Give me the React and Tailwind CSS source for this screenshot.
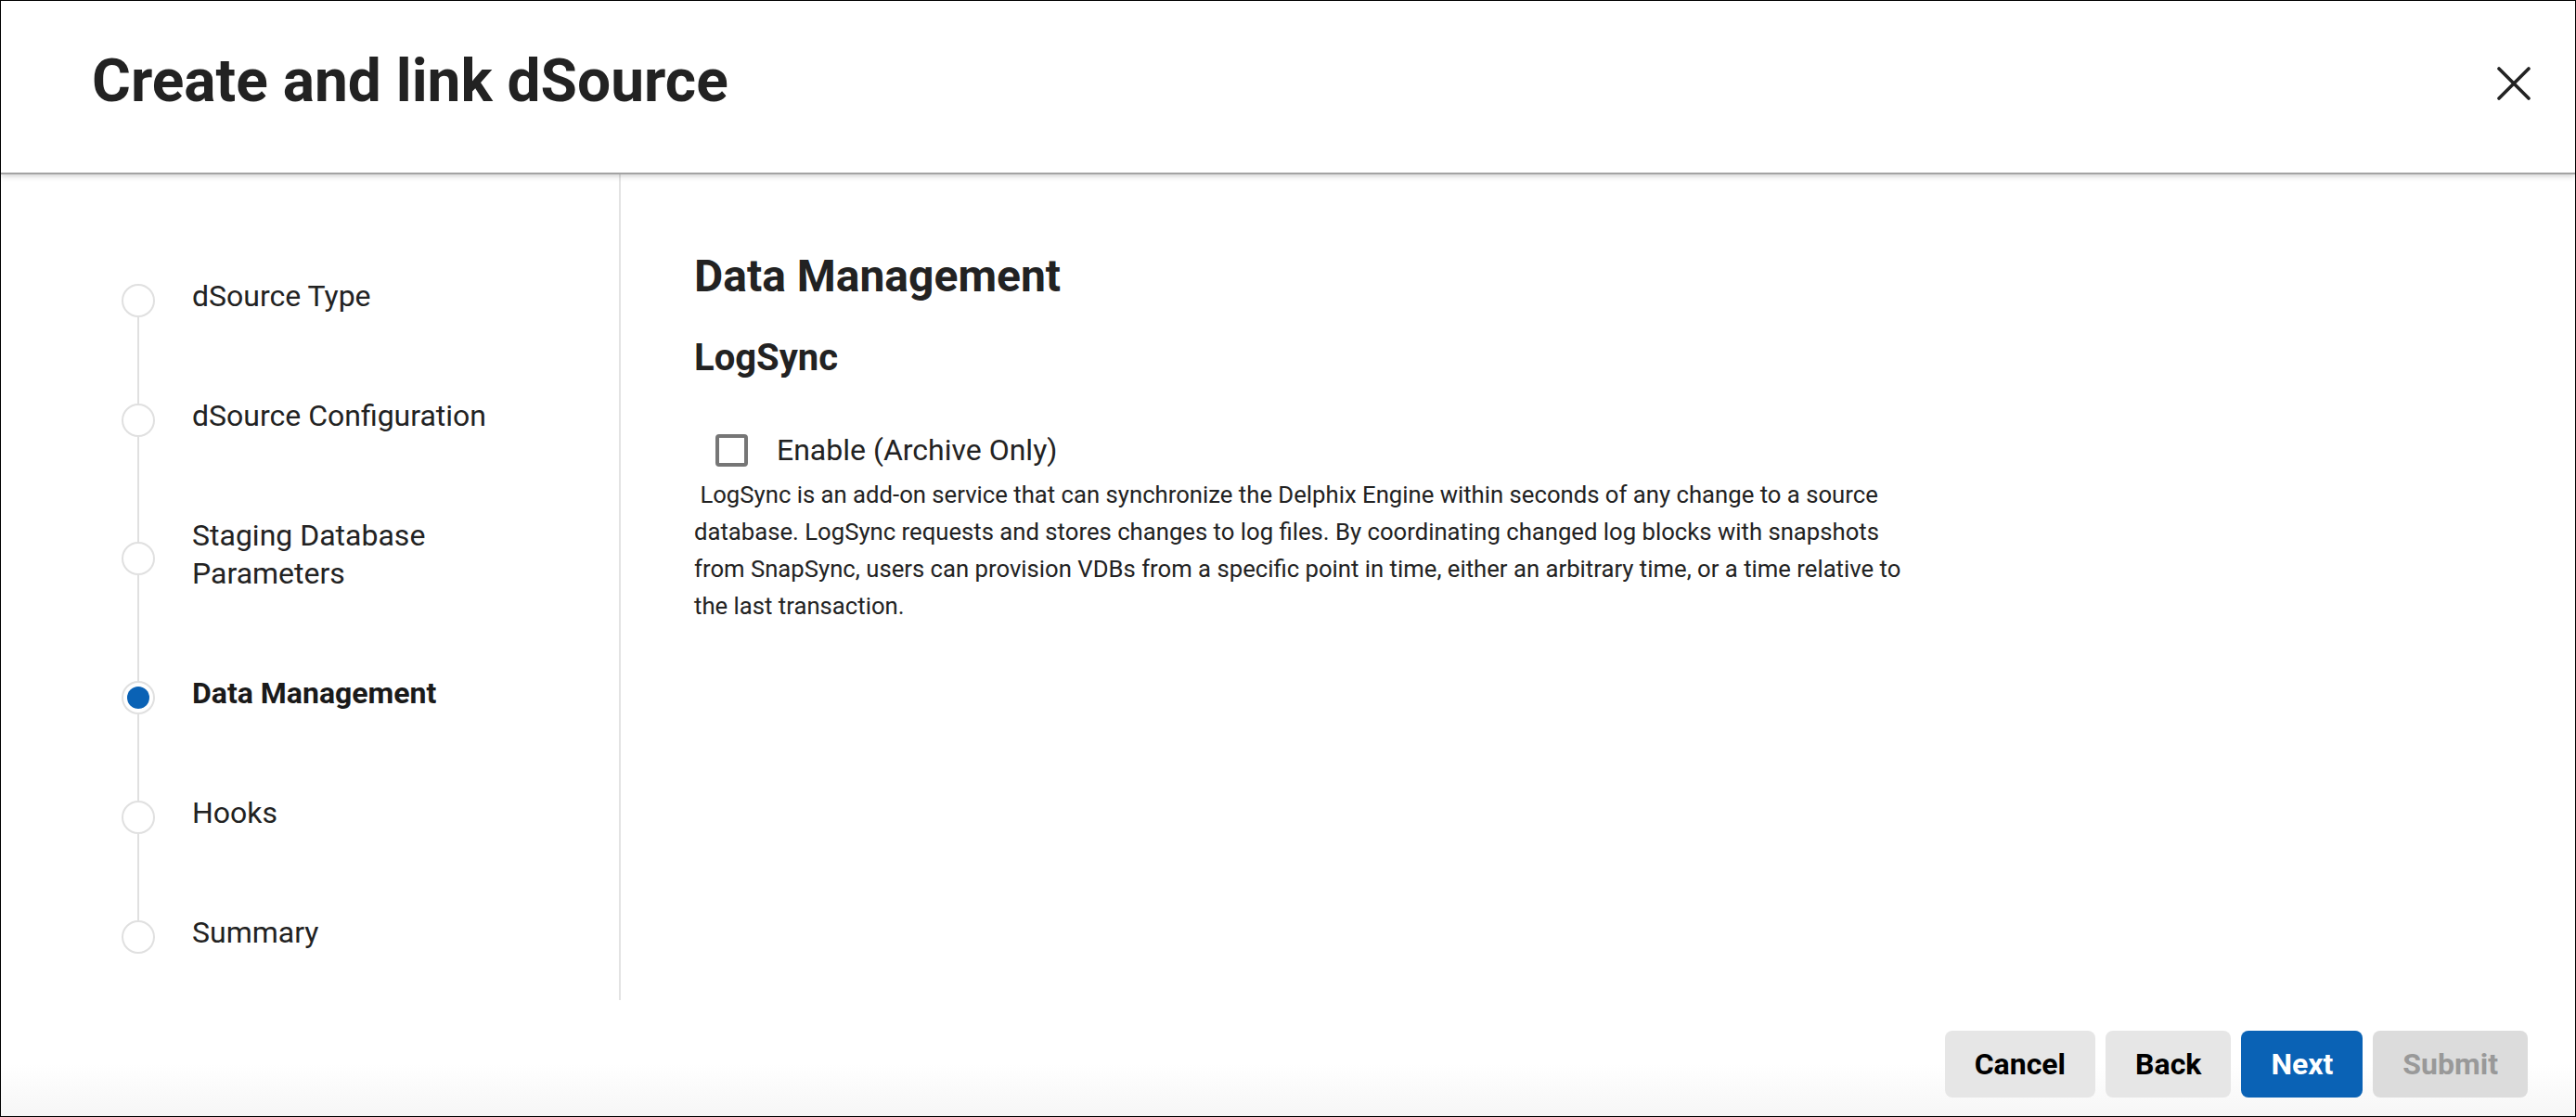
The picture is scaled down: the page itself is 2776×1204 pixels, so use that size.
const steps = [
    { label: "dSource Type" },
    { label: "dSource Configuration" },
    { label: "Staging Database Parameters", wrap: true },
    { label: "Data Management", active: true },
    { label: "Hooks" },
    { label: "Summary" },
];

function CloseIcon() {
    return (
        <svg width="36" height="36" viewBox="0 0 36 36" fill="none">
            <path
                d="M2 2L34 34M34 2L2 34"
                stroke="#222222"
                strokeWidth="3.6"
                strokeLinecap="round"
            />
        </svg>
    );
}

function StepCircle({ active }) {
    return (
        <div className="w-[36px] h-[36px] shrink-0 rounded-full border-2 border-[#e0e0e0] bg-white flex items-center justify-center">
            {active && <div className="w-[24px] h-[24px] rounded-full bg-[#0a62b5]" />}
        </div>
    );
}

function Stepper() {
    return (
        <div className="flex flex-col">
            {steps.map((step, i) => (
                <div key={step.label} className="flex items-stretch">
                    {/* rail: line above, circle, line below */}
                    <div className="w-[36px] flex flex-col items-center">
                        <div
                            className={`flex-1 w-[2px] ${
                                i === 0 ? "bg-transparent" : "bg-[#e0e0e0]"
                            }`}
                        />
                        <StepCircle active={step.active} />
                        <div
                            className={`flex-1 w-[2px] ${
                                i === steps.length - 1 ? "bg-transparent" : "bg-[#e0e0e0]"
                            }`}
                        />
                    </div>
                    <div
                        className={`ml-[40px] pt-[40px] pb-[48px] text-[32px] leading-[41px] ${
                            step.wrap ? "w-[300px]" : ""
                        } ${step.active ? "font-bold text-[#1a1a1a]" : "text-[#222222]"}`}
                    >
                        {step.label}
                    </div>
                </div>
            ))}
        </div>
    );
}

function Button({ children, variant }) {
    const styles = {
        default: "bg-[#e6e6e6] text-black",
        primary: "bg-[#0a62b5] text-white",
        disabled: "bg-[#dcdcdc] text-[#999999]",
    };

    return (
        <button
            className={`h-[72px] px-[32px] rounded-[8px] text-[32px] font-bold leading-none ${styles[variant]}`}
        >
            {children}
        </button>
    );
}

export default function App() {
    return (
        <div className="w-[2776px] h-[1204px] border border-black bg-white flex flex-col font-['Roboto',sans-serif] text-[#222222]">
            {/* Header */}
            <header className="relative z-10 h-[187px] shrink-0 bg-white border-b-2 border-[#a3a3a3] shadow-[0_2px_6px_rgba(0,0,0,0.18)] flex items-start justify-between pt-[49px] pl-[98px] pr-[48px]">
                <h1 className="text-[64px] leading-[76px] font-bold text-[#222222]">
                    Create and link dSource
                </h1>
                <button className="mt-[22px]">
                    <CloseIcon />
                </button>
            </header>

            {/* Body */}
            <div className="flex flex-1 min-h-0">
                <aside className="w-[668px] shrink-0 border-r-2 border-[#e3e3e3] pt-[71px] pl-[130px]">
                    <Stepper />
                </aside>

                <main className="flex-1 pl-[79px] pt-[82px]">
                    <h2 className="text-[48px] leading-[56px] font-bold">Data Management</h2>
                    <h3 className="mt-[36px] text-[40px] leading-[48px] font-bold">LogSync</h3>

                    <label className="mt-[55px] ml-[23px] flex items-center gap-[31px] h-[40px]">
                        <span className="w-[35px] h-[35px] rounded-[4px] border-[4px] border-[#767676]" />
                        <span className="text-[32px] leading-[40px]">Enable (Archive Only)</span>
                    </label>

                    <p className="mt-[8px] max-w-[1330px] text-[25.7px] leading-[40px]">
                        {"\u00a0"}LogSync is an add-on service that can synchronize the Delphix
                        Engine within seconds of any change to a source database. LogSync
                        requests and stores changes to log files. By coordinating changed log
                        blocks with snapshots from SnapSync, users can provision VDBs from a
                        specific point in time, either an arbitrary time, or a time relative to
                        the last transaction.
                    </p>
                </main>
            </div>

            {/* Footer */}
            <footer className="shrink-0 flex justify-end gap-[11px] pt-[33px] pb-[20px] pr-[51px] bg-linear-to-b from-white from-55% to-[#f6f6f6]">
                <Button variant="default">Cancel</Button>
                <Button variant="default">Back</Button>
                <Button variant="primary">Next</Button>
                <Button variant="disabled">Submit</Button>
            </footer>
        </div>
    );
}
